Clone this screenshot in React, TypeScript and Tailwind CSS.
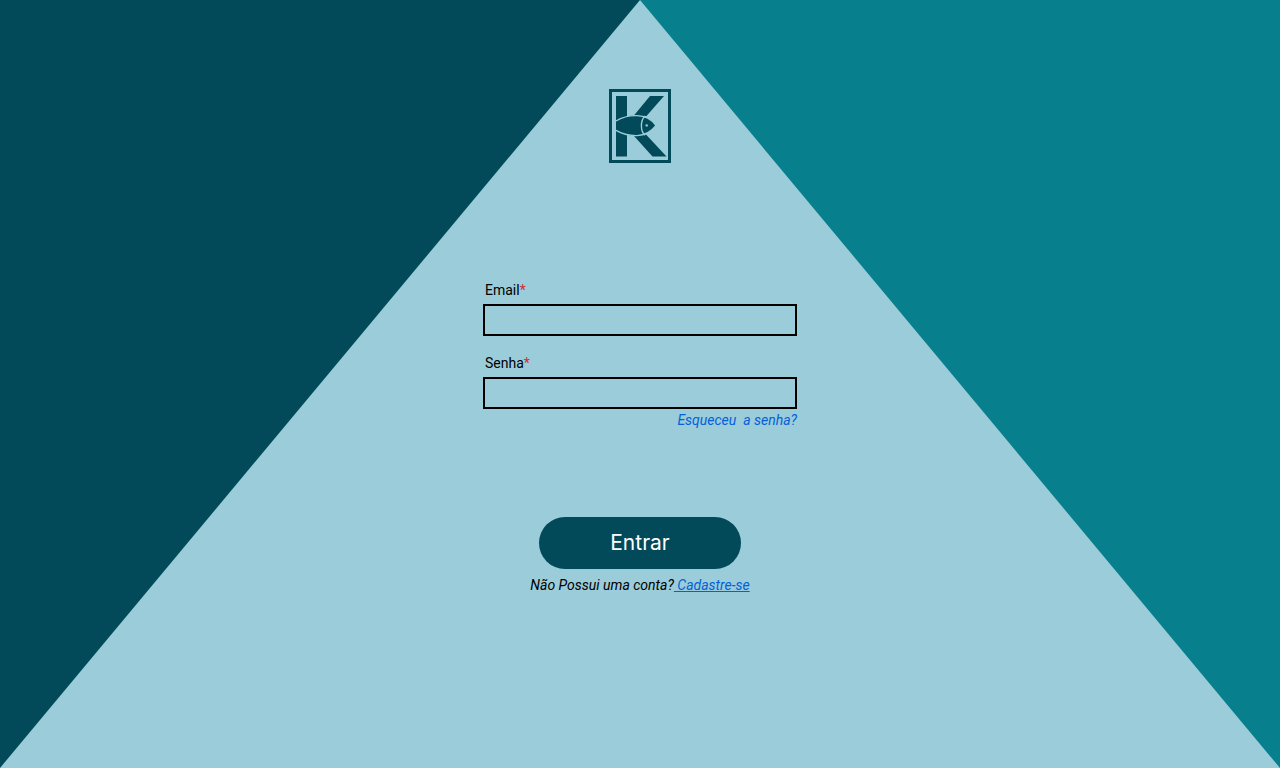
import React from "react";

function Logo() {
  return (
    <svg viewBox="0 0 62 74" className="h-[74px] w-[62px]" role="img" aria-label="K">
      <rect x="1.5" y="1.5" width="59" height="71" fill="none" stroke="#024959" strokeWidth="3" />
      <g fill="#024959">
        <path d="M7 7H18V67.5H7Z" />
        <path d="M41 7H55L37.5 27H24.5Z" />
        <path d="M25 47L37 45.5L57.5 67.5H43.5Z" />
      </g>
      <path
        d="M7 32C13 28.2 20 26.4 28 26.6C36 26.7 42.5 30.2 47 36.5C42.5 42.4 36 46.3 28 46.6C20 46.7 13 45 7 41.4"
        fill="#024959"
        stroke="#9bccd9"
        strokeWidth="1.3"
      />
      <path d="M36 27C31.2 31.5 31.2 42 36 46.2" fill="none" stroke="#9bccd9" strokeWidth="1.4" />
      <circle cx="37.7" cy="36.4" r="1.2" fill="#9bccd9" />
    </svg>
  );
}

function Field({ id, label, type }: { id: string; label: string; type: string }) {
  return (
    <div className="flex flex-col">
      <label htmlFor={id} className="px-0.5 pb-1 text-sm">
        {label}
        <span className="text-[#d02c38]">*</span>
      </label>
      <input
        id={id}
        type={type}
        required
        className="h-8 w-full border-2 border-black bg-transparent px-2 text-sm outline-none"
      />
    </div>
  );
}

export default function App() {
  return (
    <main className="relative isolate flex min-h-screen flex-col items-center bg-linear-to-r from-[#024959] from-50% to-[#077f8c] to-50% px-4 pt-[89px] pb-10 font-['Roboto',sans-serif] text-black">
      <div
        aria-hidden="true"
        className="absolute inset-0 -z-10 bg-[#9bccd9] [clip-path:polygon(50%_0,100%_100%,0_100%)]"
      />
      <Logo />
      <form className="mt-[117px] flex w-full flex-col items-center" onSubmit={(e) => e.preventDefault()}>
        <div className="flex w-full max-w-[314px] flex-col gap-[17px]">
          <Field id="email" label="Email" type="email" />
          <Field id="senha" label="Senha" type="password" />
        </div>
        <div className="flex w-full max-w-[314px] justify-end pt-px">
          <a href="#recuperar" className="text-sm whitespace-pre text-[#0560da] italic">
            {"Esqueceu  a senha?"}
          </a>
        </div>
        <button
          type="submit"
          className="mt-[87px] h-[52px] w-[202px] rounded-full bg-[#024959] font-['Inter',sans-serif] text-[21px] text-white"
        >
          Entrar
        </button>
      </form>
      <p className="mt-1.5 text-sm italic">
        Não Possui uma conta?
        <a href="#cadastro" className="whitespace-pre text-[#0560da] underline">
          {" Cadastre-se"}
        </a>
      </p>
    </main>
  );
}
